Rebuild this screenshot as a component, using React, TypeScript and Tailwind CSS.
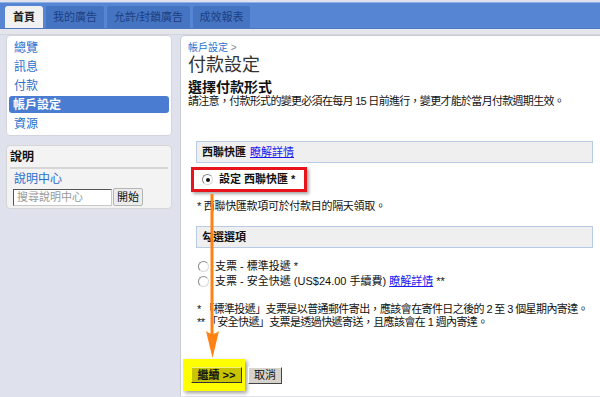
import React from "react";

const font = "font-['Liberation_Sans','Noto_Sans_CJK_TC',sans-serif]";

function Radio({ checked = false }: { checked?: boolean }) {
  return (
    <span className="inline-flex w-[11px] h-[11px] rounded-full border border-[#8a8a8a] border-r-[#d8d8d8] border-b-[#d8d8d8] bg-white items-center justify-center shrink-0">
      {checked && <span className="w-[4px] h-[4px] rounded-full bg-[#111]" />}
    </span>
  );
}

function SectionBox({ children }: { children: React.ReactNode }) {
  return (
    <div className="ml-[8px] h-[22px] border border-[#b9cbe4] bg-[#efefef] flex items-center pl-[5px] text-[11px] font-bold text-[#111]">
      {children}
    </div>
  );
}

export default function App() {
  const navItems = ["總覽", "訊息", "付款", "帳戶設定", "資源"];
  return (
    <div className={`relative w-[600px] h-[397px] overflow-hidden bg-[#dfe2ec] ${font}`}>
      {/* top bar */}
      <div className="mt-[2px] h-[27px] bg-[#5686d3] border-t border-[#8fb0e6] border-b border-b-[#4d79c2] flex items-end pl-[5px] gap-[3px]">
        <div className="h-[22px] w-[38px] bg-[#f1f1f1] rounded-t-[3px] flex items-center justify-center text-[11px] font-bold text-[#222]">
          首頁
        </div>
        <div className="h-[22px] w-[58px] bg-[#4574c3] rounded-t-[2px] flex items-center justify-center text-[11px] text-[#1d3f7f]">
          我的廣告
        </div>
        <div className="h-[22px] w-[83px] bg-[#4574c3] rounded-t-[2px] flex items-center justify-center text-[11px] text-[#1d3f7f]">
          允許/封鎖廣告
        </div>
        <div className="h-[22px] w-[57px] bg-[#4574c3] rounded-t-[2px] flex items-center justify-center text-[11px] text-[#1d3f7f]">
          成效報表
        </div>
      </div>
      <div className="h-[6px] bg-[#e5e6ec] border-b border-[#d3d5dc]" />

      {/* body */}
      <div className="flex pl-[6px] gap-[8px]">
        {/* sidebar */}
        <div className="w-[166px] shrink-0 flex flex-col">
          <div className="h-[101px] bg-white rounded-[4px] border border-[#d2d5dd] pt-[2px] px-[2px]">
            {navItems.map((t) => (
              <div key={t} className="h-[19px] flex">
                {t === "帳戶設定" ? (
                  <div className="my-[1px] w-full bg-[#4a7dd1] rounded-[3px] flex items-center pl-[4px] text-[12px] font-bold text-white">
                    {t}
                  </div>
                ) : (
                  <div className="flex items-center pl-[5px] text-[12px] text-[#2a6fce]">{t}</div>
                )}
              </div>
            ))}
          </div>
          <div className="mt-[9px] h-[64px] bg-[#f3f3f3] rounded-[4px] border border-[#d6d6d6] px-[3px] pt-[4px]">
            <div className="text-[12px] font-bold text-[#111] leading-[15px] pb-[2px] border-b-2 border-[#d6d6d6]">說明</div>
            <div className="pl-[4px] mt-[3px] text-[12px] text-[#2a6fce] leading-[14px]">說明中心</div>
            <div className="pl-[3px] mt-[2px] flex items-center gap-[1px]">
              <div className="w-[99px] h-[17px] bg-white border border-[#c8c8c8] border-t-[#555] border-l-[#555] flex items-center pl-[3px] text-[11px] text-[#999]">
                搜尋說明中心
              </div>
              <div className="w-[30px] h-[18px] bg-[#ececec] border border-[#b5b5b5] rounded-[2px] flex items-center justify-center text-[11px] text-[#111]">
                開始
              </div>
            </div>
          </div>
        </div>

        {/* main */}
        <div className="flex-1 h-[361px] bg-white rounded-tl-[5px] border-l border-t border-[#c9ccd4] pt-[6px] pl-[7px] pr-[7px] text-[#111]">
          <div className="text-[10px] leading-[12px] text-[#2a6fce]">
            帳戶設定 <span className="text-[#888]">&gt;</span>
          </div>
          <div className="text-[18px] leading-[22px] text-[#333]">付款設定</div>
          <div className="mt-[3px] text-[14px] leading-[16px] font-bold">選擇付款形式</div>
          <div className="text-[11px] leading-[13px] tracking-[-0.7px] whitespace-nowrap">
            請注意，付款形式的變更必須在每月 15 日前進行，變更才能於當月付款週期生效。
          </div>

          <div className="mt-[33px]">
            <SectionBox>
              西聯快匯
              <span className="ml-[4px] font-normal text-[#1a1aee] underline">瞭解詳情</span>
            </SectionBox>
          </div>

          <div className="mt-[4px] ml-[3px] w-[116px] h-[25px] border-[3px] border-[#e8141b] shadow-[2px_2px_3px_rgba(0,0,0,0.35)] flex items-center pl-[8px] gap-[6px]">
            <Radio checked />
            <span className="text-[11px] font-bold whitespace-nowrap">設定 西聯快匯 *</span>
          </div>

          <div className="mt-[8px] ml-[9px] text-[11px] leading-[13px] tracking-[-0.3px] whitespace-nowrap">
            * 西聯快匯款項可於付款目的隔天領取。
          </div>

          <div className="mt-[13px]">
            <SectionBox>勾選選項</SectionBox>
          </div>

          <div className="mt-[11px] ml-[10px] flex flex-col">
            <div className="h-[15px] flex items-center gap-[6px] text-[11px] whitespace-nowrap">
              <Radio />
              <span>支票 - 標準投遞 *</span>
            </div>
            <div className="h-[15px] flex items-center gap-[6px] text-[11px] whitespace-nowrap">
              <Radio />
              <span>
                支票 - 安全快遞 (US$24.00 手續費){" "}
                <span className="text-[#1a1aee] underline">瞭解詳情</span> **
              </span>
            </div>
          </div>

          <div className="mt-[14px] ml-[9px] text-[11px] leading-[13px] tracking-[-0.6px] whitespace-nowrap">
            <div>* 「標準投遞」支票是以普通郵件寄出，應該會在寄件日之後的 2 至 3 個星期內寄達。</div>
            <div>** 「安全快遞」支票是透過快遞寄送，且應該會在 1 週內寄達。</div>
          </div>

          <div className="mt-[30px] flex items-center">
            <div className="-ml-[5px] w-[62px] h-[32px] bg-[#ffff00] shadow-[2px_2px_4px_rgba(0,0,0,0.4)] flex items-center pl-[8px]">
              <div className="w-[51px] h-[16px] bg-[#c8c400] border border-t-[#f2f080] border-l-[#f2f080] border-r-[#333] border-b-[#333] flex items-center justify-center text-[11px] font-bold text-[#111] whitespace-nowrap">
                繼續 &gt;&gt;
              </div>
            </div>
            <div className="ml-[3px] w-[34px] h-[17px] bg-[#d6d3cc] border border-t-[#fff] border-l-[#fff] border-r-[#444] border-b-[#444] flex items-center justify-center text-[11px] text-[#111]">
              取消
            </div>
          </div>
        </div>
      </div>

      {/* orange arrow annotation */}
      <svg className="absolute left-0 top-0 pointer-events-none" width="600" height="397" viewBox="0 0 600 397">
        <line x1="212" y1="194" x2="212" y2="337" stroke="#ff8212" strokeWidth="3" />
        <path d="M206 331 Q212.5 337 219 331 L212.5 358 Z" fill="#ff8212" />
      </svg>
    </div>
  );
}
